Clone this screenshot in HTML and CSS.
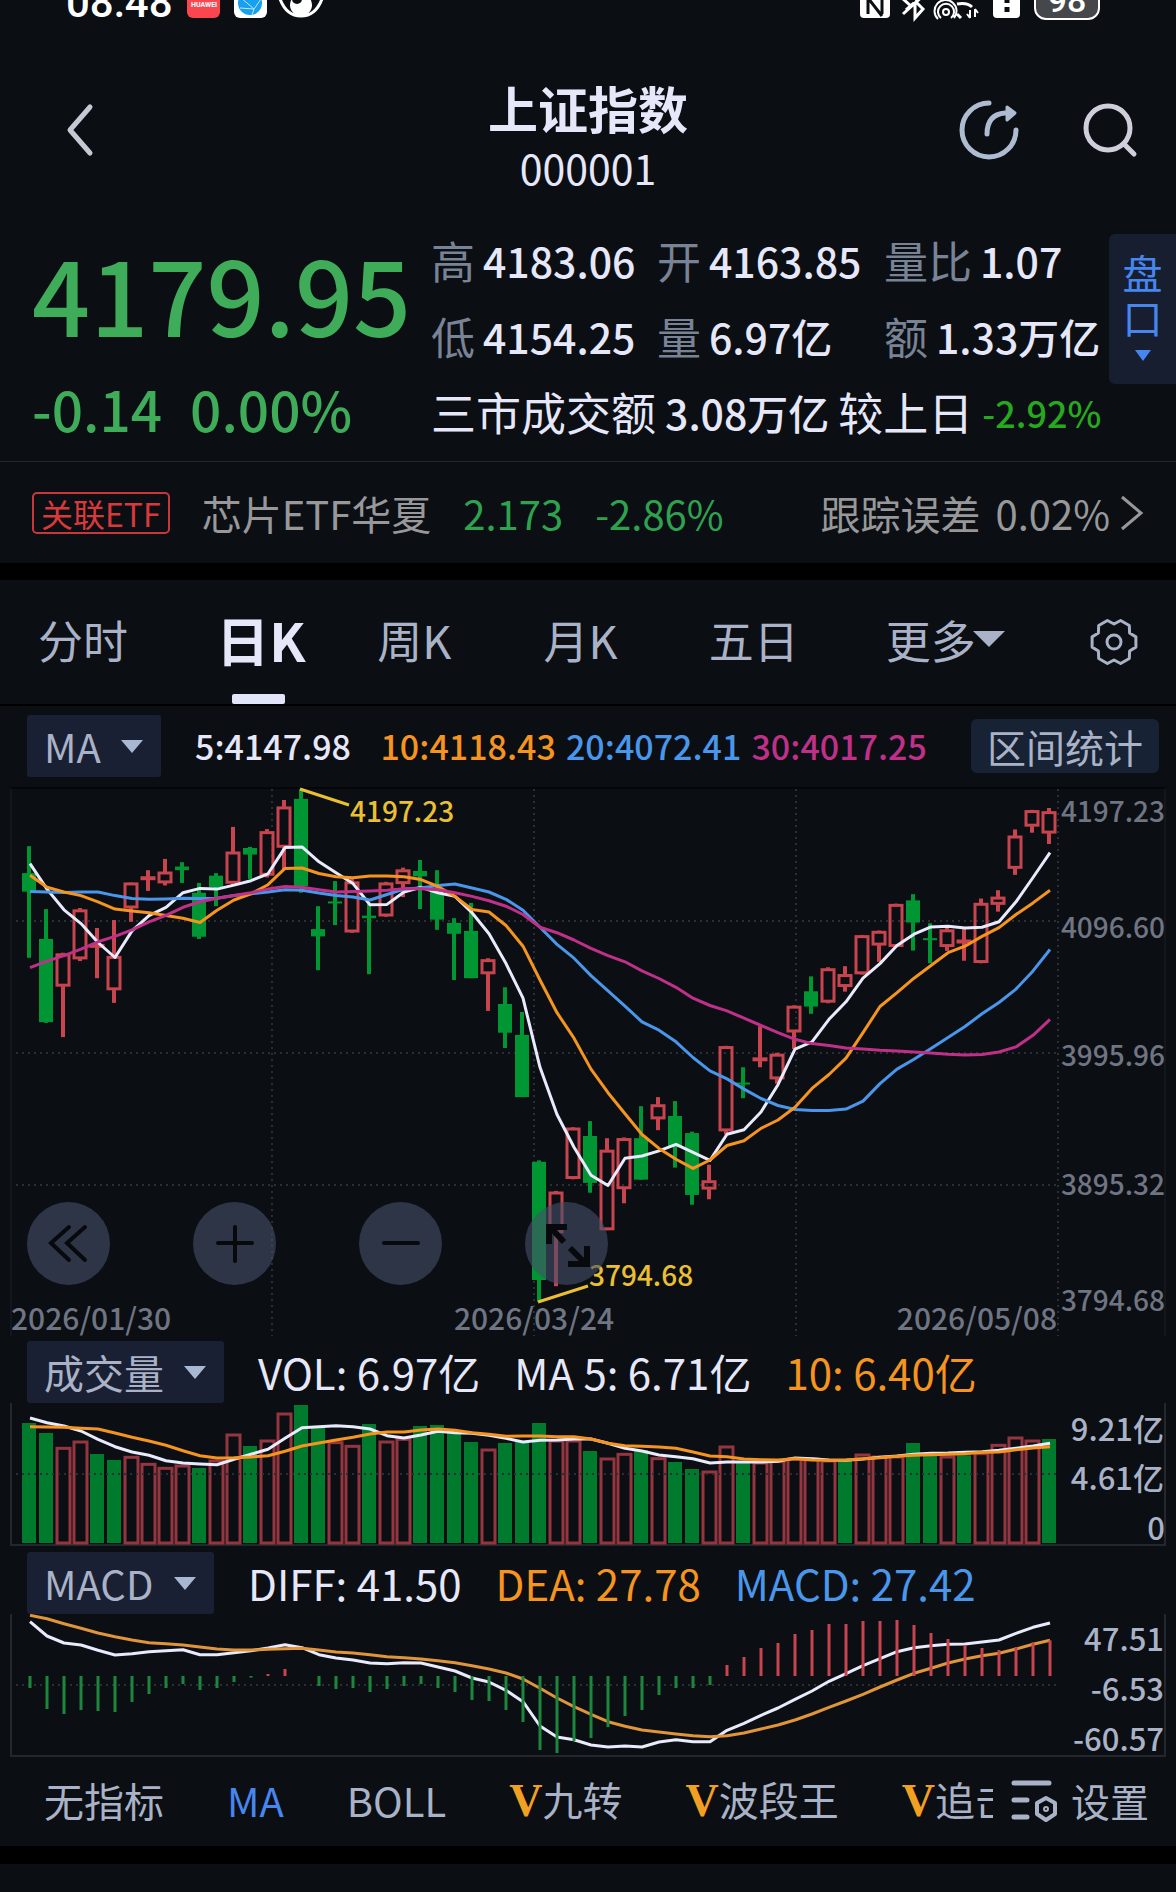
FILE: index.html
```
<!DOCTYPE html>
<html lang="zh-CN">
<head>
    <meta charset="UTF-8">
    <meta name="viewport" content="width=device-width, initial-scale=1.0">
    <title>上证指数 000001</title>
    <link rel="stylesheet" href="styles.css">
</head>
<body>
    <div class="status">
        <span class="time">08:48</span>
        <svg class="status-left" width="140" height="22" viewBox="0 0 140 22">
            <rect x="0" y="-14" width="33" height="32" rx="6" fill="#fb4650"/>
            <text x="4" y="7" font-size="7" font-weight="700" fill="#fff">HUAWEI</text>
            <rect x="47" y="-14" width="33" height="32" rx="6" fill="#fff"/>
            <circle cx="63" cy="3" r="12" fill="#179ff0"/>
            <path d="M53-3l14 12 7-10M67 9l-2 6M53 8l14 1" fill="none" stroke="#bfe6ff"/>
            <path d="M92-4c4 13 11 20 22 20s18-7 22-20" fill="none" stroke="#fff" stroke-width="3"/>
            <circle cx="114" cy="5" r="11" fill="#fff"/>
            <circle cx="110" cy="-1" r="5" fill="#0b0e13"/>
        </svg>
        <svg class="status-right" width="166" height="22" viewBox="0 0 166 22">
            <rect x="0" y="-12" width="30" height="30" rx="4" fill="#fff"/>
            <path d="M8-6v20M8-2l14 18M22-6v20" fill="none" stroke="#0b0e13" stroke-width="3"/>
            <path d="M43 14l22-20M42-2l10 9M46 10l8-7M55 2v16l8-9-8-8" fill="none" stroke="#fff" stroke-width="3"/>
            <g fill="none" stroke="#fff" stroke-width="2">
                <circle cx="86" cy="12" r="3"/>
                <path d="M81 18a8 8 0 1 1 10 0M78 19a11 11 0 1 1 16-1"/>
                <path d="M97 4q10-2 15 3M97 14l4 4" stroke-width="3"/>
                <path d="M110 10v8M115 9v8M107 14l3 4M118 13l-3-4"/>
            </g>
            <rect x="133" y="-12" width="27" height="30" rx="4" fill="#fff"/>
            <path d="M147-2v5M147 7v5" stroke="#0b0e13" stroke-width="5"/>
        </svg>
        <span class="battery">98</span>
    </div>

    <header class="header">
        <button class="icon-btn back" aria-label="返回">
            <svg width="30" height="56" viewBox="0 0 30 56"><path d="M26 5L6 28l20 23" fill="none" stroke="#c6c8d4" stroke-width="5" stroke-linecap="round" stroke-linejoin="round"/></svg>
        </button>
        <div class="title">
            <h1>上证指数</h1>
            <p>000001</p>
        </div>
        <div class="actions">
            <button class="icon-btn" aria-label="分享">
                <svg width="62" height="62" viewBox="0 0 62 62" fill="none" stroke="#aebcd2" stroke-width="5" stroke-linecap="round">
                    <path d="M31 4A27 27 0 1 0 58 31"/>
                    <path d="M29 35c0-13 6-20 18-21"/>
                    <path d="M49 8l8 6-8 7z" fill="#aebcd2" stroke-width="3" stroke-linejoin="round"/>
                </svg>
            </button>
            <button class="icon-btn" aria-label="搜索">
                <svg width="56" height="56" viewBox="0 0 56 56" fill="none" stroke="#cfcfdb" stroke-width="5" stroke-linecap="round">
                    <circle cx="26" cy="26" r="22"/>
                    <path d="M42 42l10 10"/>
                </svg>
            </button>
        </div>
    </header>

    <section class="quote">
        <div class="price">
            <strong>4179.95</strong>
            <p><span>-0.14</span><span>0.00%</span></p>
        </div>
        <div class="stats">
            <dl class="stat-grid">
                <div><dt>高</dt><dd>4183.06</dd></div>
                <div><dt>开</dt><dd>4163.85</dd></div>
                <div><dt>量比</dt><dd>1.07</dd></div>
                <div><dt>低</dt><dd>4154.25</dd></div>
                <div><dt>量</dt><dd>6.97亿</dd></div>
                <div><dt>额</dt><dd>1.33万亿</dd></div>
            </dl>
            <p class="turnover"><span>三市成交额</span><b>3.08万亿</b><span>较上日</span><em>-2.92%</em></p>
        </div>
        <button class="depth">盘<br>口<i class="arrow"></i></button>
    </section>

    <a class="etf" href="#etf">
        <span class="badge">关联ETF</span>
        <span class="etf-name">芯片ETF华夏</span>
        <span class="down">2.173</span>
        <span class="down">-2.86%</span>
        <span class="track">跟踪误差</span>
        <span>0.02%</span>
        <svg width="24" height="36" viewBox="0 0 24 36"><path d="M2 2l19 16L2 34" fill="none" stroke="#98989a" stroke-width="3"/></svg>
    </a>

    <nav class="tabs">
        <button>分时</button>
        <button class="active">日K</button>
        <button>周K</button>
        <button>月K</button>
        <button>五日</button>
        <button>更多<i class="arrow"></i></button>
        <button aria-label="图表设置">
            <svg width="48" height="48" viewBox="0 0 48 48" fill="none" stroke="#a9b2c6" stroke-width="3" stroke-linejoin="round">
                <path d="M45.9 18.9v10.2L39.6 33l-.3 7.5-8.7 5L24 42l-6.6 3.5-8.7-5L8.4 33l-6.3-3.9V18.9L8.4 15l.3-7.5 8.7-5L24 6l6.6-3.5 8.7 5 .3 7.5z"/>
                <circle cx="24" cy="24" r="7"/>
            </svg>
        </button>
    </nav>

    <div class="legend ma-legend">
        <label class="picker"><select aria-label="主图指标"><option>MA</option></select></label>
        <div class="ma-values">
            <span>5:4147.98</span>
            <span class="orange">10:4118.43</span>
            <span class="blue">20:4072.41</span>
            <span class="pink">30:4017.25</span>
        </div>
        <button class="range-btn">区间统计</button>
    </div>

    <div class="kline">
        <svg id="kline" viewBox="0 0 1176 550"></svg>
        <div class="chart-tools">
            <button aria-label="左移"><svg viewBox="0 0 83 83"><path d="M42 25L24 41l18 17M58 25L40 41l18 17"/></svg></button>
            <button aria-label="放大"><svg viewBox="0 0 83 83"><path d="M25 41h34M42 25v34"/></svg></button>
            <button aria-label="缩小"><svg viewBox="0 0 83 83"><path d="M25 41h34"/></svg></button>
            <button aria-label="全屏"><svg class="expand" viewBox="0 0 83 83"><path d="M39 40L25 25M24 42V25h18M45 46l16 16M62 44v18H43"/></svg></button>
        </div>
    </div>

    <div class="legend">
        <label class="picker"><select aria-label="副图一指标"><option>成交量</option></select></label>
        <span>VOL: 6.97亿</span>
        <span>MA 5: 6.71亿</span>
        <span class="orange">10: 6.40亿</span>
    </div>
    <svg id="volume" viewBox="0 0 1176 144"></svg>

    <div class="legend">
        <label class="picker"><select aria-label="副图二指标"><option>MACD</option></select></label>
        <span>DIFF: 41.50</span>
        <span class="orange">DEA: 27.78</span>
        <span class="blue">MACD: 27.42</span>
    </div>
    <svg id="macd" viewBox="0 0 1176 144"></svg>

    <div class="indicators">
        <div class="indicator-list">
            <button>无指标</button>
            <button class="active">MA</button>
            <button>BOLL</button>
            <button><b>V</b>九转</button>
            <button><b>V</b>波段王</button>
            <button><b>V</b>追击</button>
        </div>
        <button class="settings">
            <svg width="48" height="44" viewBox="0 0 48 44" fill="none" stroke="#a9b2c6" stroke-width="5" stroke-linecap="round">
                <path d="M3 5h35M3 22h13M3 39h13"/>
                <path d="M35 20l9 5v11l-9 6-9-6V25z" stroke-width="4" stroke-linejoin="round"/>
                <circle cx="35" cy="31" r="1" stroke-width="4"/>
            </svg>
            设置
        </button>
    </div>

    <script src="charts.js"></script>
</body>
</html>
```
FILE: charts.js
```
const RED = '#c8444e';
const GREEN = '#009634';
const WHITE = '#e9eafb';
const ORANGE = '#f5941f';
const BLUE = '#4a96ea';
const PINK = '#bf3088';
const STEP = 17;
const FIRST = 29;

// [color, high, body top, body bottom, low], measured down from the top of the pane
const candles = [
    ['g', 182, 256, 307, 489], ['g', 355, 437, 666, 668], ['r', 475, 478, 567, 707],
    ['r', 352, 357, 492, 498], ['r', 407, 452, 456, 545], ['r', 385, 485, 577, 613],
    ['r', 282, 283, 352, 390], ['r', 248, 266, 270, 305], ['r', 217, 253, 283, 290],
    ['g', 226, 238, 248, 283], ['g', 283, 310, 431, 437], ['g', 256, 263, 295, 347],
    ['r', 129, 198, 284, 290], ['g', 184, 187, 205, 272], ['r', 135, 142, 262, 268],
    ['r', 55, 74, 185, 245], ['g', 26, 52, 292, 310], ['g', 347, 410, 430, 523],
    ['g', 278, 334, 338, 399], ['r', 268, 280, 418, 420], ['g', 340, 373, 380, 534],
    ['r', 280, 283, 374, 376], ['r', 241, 247, 285, 322], ['g', 220, 250, 265, 355],
    ['g', 248, 300, 384, 412], ['g', 380, 393, 423, 550], ['g', 338, 415, 545, 545],
    ['r', 490, 494, 533, 635], ['g', 570, 616, 695, 737], ['g', 638, 701, 872, 872],
    ['g', 1046, 1050, 1375, 1435], ['r', 1130, 1133, 1245, 1392], ['r', 955, 957, 1096, 1098],
    ['g', 938, 979, 1108, 1135], ['r', 985, 1018, 1237, 1238], ['r', 983, 986, 1124, 1164],
    ['g', 897, 985, 1099, 1099], ['r', 872, 893, 932, 963], ['g', 883, 924, 1010, 1066],
    ['g', 967, 971, 1141, 1168], ['r', 1058, 1102, 1125, 1153], ['r', 731, 733, 965, 975],
    ['g', 790, 832, 836, 875], ['r', 677, 764, 768, 790], ['r', 750, 754, 822, 835],
    ['r', 620, 622, 693, 740], ['g', 540, 581, 623, 643], ['r', 515, 519, 611, 614],
    ['r', 512, 535, 568, 582], ['r', 426, 428, 533, 535], ['r', 414, 416, 454, 500],
    ['r', 340, 342, 458, 460], ['g', 314, 331, 392, 469], ['g', 394, 435, 439, 504],
    ['r', 402, 412, 458, 470], ['r', 405, 440, 446, 497], ['r', 326, 339, 502, 504],
    ['r', 303, 322, 342, 362], ['r', 136, 154, 243, 261], ['r', 82, 84, 127, 145],
    ['r', 77, 87, 146, 176]
];
const ma5 = [230, 300, 357, 395, 447, 488, 415, 373, 350, 310, 298, 300, 289, 277, 258, 186, 184, 225, 255, 285, 343, 342, 308, 295, 310, 320, 365, 423, 505, 600, 790, 920, 1010, 1087, 1115, 1040, 1034, 1020, 1002, 1024, 1046, 974, 962, 913, 838, 740, 720, 658, 610, 545, 505, 455, 424, 404, 402, 407, 405, 390, 335, 268, 200];
const ma10 = [262, 295, 308, 318, 335, 355, 360, 365, 373, 380, 392, 358, 330, 313, 288, 243, 242, 257, 266, 269, 264, 264, 266, 274, 293, 320, 356, 363, 400, 457, 550, 640, 710, 795, 860, 918, 975, 1013, 1043, 1068, 1045, 1005, 992, 958, 935, 900, 848, 810, 765, 695, 623, 585, 545, 510, 475, 457, 430, 406, 370, 338, 303];
const ma20 = [307, 308, 309, 308, 308, 318, 326, 328, 327, 325, 326, 325, 318, 313, 308, 302, 303, 311, 318, 322, 330, 315, 300, 297, 290, 286, 297, 308, 328, 358, 405, 452, 490, 538, 580, 622, 665, 688, 720, 763, 800, 822, 850, 876, 895, 906, 909, 909, 905, 883, 835, 795, 768, 738, 708, 678, 643, 612, 575, 525, 466];
const ma30 = [516, 498, 483, 465, 445, 430, 412, 390, 372, 350, 335, 325, 318, 310, 300, 293, 295, 302, 308, 307, 305, 303, 299, 299, 302, 310, 320, 332, 347, 370, 405, 420, 440, 463, 483, 500, 525, 546, 570, 600, 620, 635, 655, 675, 695, 713, 725, 730, 737, 740, 743, 745, 748, 751, 754, 756, 755, 748, 734, 702, 658];

const volColors = 'ggrrggrrrrgrrgrrggrrgrrggggrgggrrgrrgrggrrgrrrrrgrrrggrgrrrrg';
const volumes = [279, 309, 352, 333, 372, 390, 379, 400, 412, 405, 414, 390, 312, 348, 330, 249, 225, 290, 335, 346, 282, 333, 325, 288, 285, 300, 336, 357, 339, 335, 279, 330, 330, 363, 384, 370, 360, 383, 396, 417, 423, 348, 395, 396, 392, 384, 384, 390, 390, 372, 378, 378, 339, 372, 378, 376, 368, 343, 321, 330, 327];
const volMa5 = [264, 278, 288, 303, 328, 350, 366, 376, 392, 399, 402, 404, 388, 373, 358, 325, 293, 290, 287, 290, 297, 317, 324, 315, 304, 308, 310, 316, 325, 336, 331, 330, 327, 327, 340, 355, 363, 375, 380, 386, 399, 396, 396, 396, 394, 384, 386, 390, 391, 387, 382, 378, 373, 370, 369, 367, 365, 361, 355, 348, 340];
const volMa10 = [290, 291, 292, 295, 297, 309, 322, 333, 346, 362, 377, 384, 383, 381, 377, 364, 348, 339, 330, 322, 312, 306, 306, 300, 297, 301, 308, 313, 319, 318, 318, 320, 320, 327, 340, 347, 349, 351, 355, 366, 378, 380, 387, 389, 390, 386, 390, 391, 390, 386, 383, 379, 376, 374, 373, 371, 367, 366, 359, 354, 350];

const macdBars = [261, 324, 339, 327, 330, 333, 303, 279, 261, 249, 267, 261, 243, 230, 219, 204, 225, 255, 264, 261, 273, 264, 255, 249, 261, 273, 297, 300, 327, 363, 447, 456, 420, 411, 378, 345, 327, 282, 261, 261, 252, 192, 168, 141, 126, 99, 87, 69, 69, 60, 60, 57, 72, 96, 114, 132, 141, 147, 138, 124, 118];
const diff = [62, 105, 126, 132, 148, 162, 158, 152, 149, 146, 161, 161, 155, 149, 141, 131, 140, 161, 171, 177, 186, 188, 185, 186, 198, 210, 231, 243, 268, 302, 375, 408, 416, 432, 438, 435, 438, 423, 416, 422, 422, 388, 367, 343, 321, 295, 270, 241, 218, 194, 173, 152, 140, 134, 130, 129, 123, 117, 97, 79, 66];
const dea = [43, 53, 68, 82, 96, 107, 117, 125, 128, 132, 138, 144, 147, 147, 145, 143, 142, 147, 153, 156, 161, 167, 170, 174, 179, 185, 194, 204, 216, 234, 262, 291, 317, 340, 362, 376, 387, 393, 399, 404, 407, 404, 396, 384, 372, 357, 339, 319, 300, 280, 258, 237, 217, 202, 186, 174, 164, 157, 144, 130, 118];

const cx = i => FIRST + i * STEP;

function line(x1, y1, x2, y2, stroke, width, extra = '') {
    return `<line x1="${x1}" y1="${y1}" x2="${x2}" y2="${y2}" stroke="${stroke}" stroke-width="${width}" ${extra}/>`;
}

function dotted(x1, y1, x2, y2) {
    return line(x1, y1, x2, y2, '#2b2e34', 2, 'stroke-dasharray="2 4"');
}

function curve(values, y, stroke) {
    const points = values.map((v, i) => `${cx(i) + 1},${y(v).toFixed(1)}`).join(' ');
    return `<polyline points="${points}" fill="none" stroke="${stroke}" stroke-width="3" stroke-linejoin="round"/>`;
}

function text(x, y, value, cls, anchor = 'start') {
    return `<text x="${x}" y="${y}" class="${cls}" text-anchor="${anchor}">${value}</text>`;
}

function drawKline() {
    const y = v => v / 2.75 - 6;
    let out = line(10, 2, 1166, 2, '#050608', 2) + line(11, 2, 11, 550, '#1c1f25', 1) + line(1165, 2, 1165, 550, '#1c1f25', 1);
    [135, 267, 399].forEach(v => out += dotted(16, v, 1058, v));
    [272, 534, 796, 1058].forEach(v => out += dotted(v, 3, v, 550));
    candles.forEach(([c, high, top, bottom, low], i) => {
        const x = cx(i);
        const h = Math.max(y(bottom) - y(top), 2);
        if (c === 'g') {
            out += line(x, y(high), x, y(low), GREEN, 4);
            out += `<rect x="${x - 7}" y="${y(top)}" width="14" height="${h}" fill="${GREEN}"/>`;
        } else {
            out += line(x, y(high), x, y(top), RED, 4) + line(x, y(bottom), x, y(low), RED, 4);
            out += `<rect x="${x - 6}" y="${y(top) + 1}" width="12" height="${Math.max(h - 2, 1)}" fill="none" stroke="${RED}" stroke-width="3"/>`;
        }
    });
    out += curve(ma5, y, WHITE) + curve(ma20, y, BLUE) + curve(ma10, y, ORANGE) + curve(ma30, y, PINK);
    out += line(300, 3, 349, 19, '#eac032', 3) + line(538, 516, 588, 500, '#eac032', 3);
    out += text(350, 36, '4197.23', 'mark') + text(589, 500, '3794.68', 'mark');
    [['4197.23', 36], ['4096.60', 152], ['3995.96', 280], ['3895.32', 409], ['3794.68', 525]].forEach(([t, ty]) => {
        out += text(1165, ty, t, 'axis', 'end');
    });
    out += text(11, 544, '2026/01/30', 'date') + text(534, 544, '2026/03/24', 'date', 'middle') + text(1057, 544, '2026/05/08', 'date', 'end');
    document.getElementById('kline').innerHTML = out;
}

function frame() {
    return `<path d="M11 0v142h1154V0" fill="none" stroke="#24282e" stroke-width="2"/>`;
}

function drawVolume() {
    const y = v => v / 3 - 73;
    let out = frame();
    volumes.forEach((v, i) => {
        const x = cx(i);
        if (volColors[i] === 'g') {
            out += `<rect x="${x - 7}" y="${y(v)}" width="14" height="${140 - y(v)}" fill="#007a2c"/>`;
        } else {
            out += `<rect x="${x - 6}" y="${y(v) + 1}" width="13" height="${139 - y(v)}" fill="none" stroke="#943640" stroke-width="3"/>`;
        }
    });
    out += dotted(16, 71, 1058, 71);
    out += curve(volMa5, y, WHITE) + curve(volMa10, y, ORANGE);
    out += text(1164, 38, '9.21亿', 'side', 'end') + text(1164, 87, '4.61亿', 'side', 'end') + text(1165, 137, '0', 'side', 'end');
    document.getElementById('volume').innerHTML = out;
}

function drawMacd() {
    const y = v => v / 3 - 13;
    let out = frame() + dotted(16, 71, 1058, 71);
    out += curve(diff, y, WHITE) + curve(dea, y, '#e0953a');
    macdBars.forEach((v, i) => {
        out += line(cx(i) + 1, 62, cx(i) + 1, y(v), v > 225 ? '#1d863c' : RED, 3);
    });
    out += text(1164, 37, '47.51', 'side', 'end') + text(1164, 87, '-6.53', 'side', 'end') + text(1164, 137, '-60.57', 'side', 'end');
    document.getElementById('macd').innerHTML = out;
}

drawKline();
drawVolume();
drawMacd();
```
FILE: styles.css
```
* {
    box-sizing: border-box;
}
body {
    margin: 0;
    min-height: 100vh;
    background-color: #0b0e13;
    color: #e6e8fa;
    font-family: "Noto Sans CJK SC", "Liberation Sans", sans-serif;
    font-size: 40px;
    line-height: 1;
}
h1, p, dl, dd {
    margin: 0;
}
button, select {
    font: inherit;
    color: inherit;
    background: none;
    border: none;
    padding: 0;
    white-space: nowrap;
    cursor: pointer;
}
svg {
    display: block;
}
#kline, #volume, #macd {
    width: 100%;
    height: auto;
}
.arrow {
    display: inline-block;
    border: 11px solid transparent;
    border-top: 14px solid currentColor;
    border-bottom: 0;
}

/* status bar */
.status {
    display: flex;
    align-items: flex-end;
    height: 22px;
    padding: 0 76px 0 66px;
    overflow: hidden;
    font-family: Roboto, sans-serif;
    color: #fff;
}
.time {
    font-size: 42px;
    font-weight: 500;
    line-height: 38px;
}
.status-left {
    margin-left: 14px;
}
.status-right {
    margin-left: auto;
}
.battery {
    width: 66px;
    height: 42px;
    margin: 0 0 2px 8px;
    border: 2px solid #fff;
    border-radius: 12px;
    background-color: #45474b;
    font-size: 34px;
    font-weight: 500;
    line-height: 40px;
    text-align: center;
}

/* header */
.header {
    display: grid;
    grid-template-columns: 200px 1fr 200px;
    align-items: center;
    height: 208px;
    padding: 8px 38px 0 64px;
}
.back {
    justify-self: start;
}
.title {
    padding: 14px 26px 0 0;
    text-align: center;
}
.title h1 {
    font-size: 50px;
    line-height: 60px;
}
.title p {
    font-size: 41px;
    line-height: 60px;
}
.actions {
    display: flex;
    align-items: center;
    justify-content: flex-end;
    gap: 62px;
}

/* quote */
.quote {
    display: flex;
    align-items: flex-start;
    height: 232px;
    border-bottom: 1px solid #25282d;
}
.price {
    width: 431px;
    padding-left: 32px;
    color: #3fac59;
}
.price strong {
    display: block;
    font-size: 102px;
    font-weight: 500;
    line-height: 126px;
}
.price p {
    display: flex;
    gap: 28px;
    font-size: 55px;
    font-weight: 500;
    line-height: 104px;
}
.stats {
    flex: 1;
    margin-top: -8px;
    line-height: 76px;
}
.stat-grid {
    display: grid;
    grid-template-columns: 226px 227px 1fr;
}
.stat-grid div, .turnover {
    display: flex;
    white-space: nowrap;
}
.stat-grid div {
    gap: 8px;
}
dt {
    font-size: 44px;
    color: #788395;
}
dd, .turnover b {
    font-size: 41px;
    font-weight: 500;
}
.turnover {
    gap: 9px;
    font-size: 45px;
}
.turnover em {
    font-size: 36px;
    font-style: normal;
    font-weight: 500;
    color: #26a91f;
}
.depth {
    width: 67px;
    height: 150px;
    margin-top: 4px;
    padding-bottom: 8px;
    border-radius: 6px 0 0 6px;
    background-color: #171e2f;
    color: #4686ee;
    line-height: 45px;
}
.depth .arrow {
    display: block;
    width: 0;
    margin: 10px auto 0;
    border-width: 11px 8px 0;
}

/* related etf */
.etf {
    display: flex;
    align-items: center;
    height: 101px;
    padding: 0 32px;
    color: #98989a;
    text-decoration: none;
    white-space: nowrap;
}
.badge {
    padding: 0 7px;
    border: 2px solid #c8373c;
    border-radius: 5px;
    color: #d8393b;
    font-size: 32px;
    line-height: 38px;
}
.etf-name {
    margin: 0 32px;
}
.down {
    margin-right: 32px;
    color: #2fa24f;
}
.track {
    margin: 0 15px 0 auto;
}
.etf svg {
    margin-left: 10px;
}

/* period tabs */
.tabs {
    display: grid;
    grid-template-columns: 178fr 161fr 166fr 165fr 177fr 204fr 48px;
    align-items: center;
    height: 143px;
    padding: 0 38px;
    border-top: 17px solid #000;
    border-bottom: 2px solid #000;
    font-size: 45px;
    color: #a9b2c6;
}
.tabs button {
    display: flex;
    align-items: center;
    height: 124px;
    padding-bottom: 6px;
}
.tabs button:last-child {
    padding-bottom: 0;
}
.tabs .active {
    position: relative;
    font-size: 53px;
    font-weight: 700;
    color: #e6e8fa;
}
.tabs .active::after {
    content: "";
    position: absolute;
    left: 16px;
    bottom: 0;
    width: 53px;
    height: 10px;
    border-radius: 2px;
    background-color: #e2e4f8;
}
.tabs .arrow {
    margin-left: -3px;
    border-width: 16px 16px 0;
}

/* legends */
.legend {
    display: flex;
    align-items: flex-end;
    gap: 34px;
    height: 67px;
    padding: 0 17px 0 27px;
    font-size: 42px;
    line-height: 62px;
    white-space: nowrap;
}
.ma-legend {
    align-items: center;
    height: 80px;
}
.picker {
    position: relative;
    font-size: 40px;
    color: #a9b2c6;
}
.picker select {
    appearance: none;
    display: block;
    height: 62px;
    padding: 0 60px 0 17px;
    border-radius: 3px;
    background-color: #1a2033;
}
.picker::after {
    content: "";
    position: absolute;
    right: 18px;
    top: 25px;
    border: 11px solid transparent;
    border-top: 13px solid #a9b8d2;
    border-bottom: 0;
    pointer-events: none;
}
.ma-values {
    display: grid;
    flex: 1;
    grid-template-columns: repeat(4, 1fr);
    font-size: 34px;
    font-weight: 500;
}
.range-btn {
    height: 54px;
    padding: 0 16px;
    border-radius: 6px;
    background-color: #182235;
    color: #a9b2c6;
    font-size: 39px;
    line-height: 54px;
}
.orange {
    color: #f5941f;
}
.blue {
    color: #4a96ea;
}
.pink {
    color: #bf3088;
}

/* charts */
.kline {
    position: relative;
}
.chart-tools {
    position: absolute;
    left: 27px;
    bottom: 51px;
    display: flex;
    gap: 83px;
}
.chart-tools button {
    width: 83px;
    height: 83px;
    border-radius: 50%;
    background-color: rgba(68, 80, 105, 0.6);
}
.chart-tools path {
    fill: none;
    stroke: #07090d;
    stroke-width: 4;
    stroke-linecap: round;
}
.chart-tools .expand path {
    stroke-width: 6;
    stroke-linecap: butt;
}
.mark {
    font-size: 28px;
    font-weight: 500;
    fill: #eac032;
}
.axis {
    font-size: 28px;
    font-weight: 500;
    fill: #6f7582;
}
.date {
    font-size: 30px;
    font-weight: 500;
    fill: #6f7582;
}
.side {
    font-size: 31px;
    font-weight: 500;
    fill: #a9b2c6;
}

/* bottom indicators */
.indicators {
    display: flex;
    align-items: center;
    gap: 18px;
    height: 106px;
    padding: 0 27px 4px 44px;
    border-bottom: 18px solid #000;
    color: #a9b2c6;
}
.indicator-list {
    display: flex;
    flex: 1;
    gap: 63px;
    overflow: hidden;
    line-height: 60px;
}
.indicator-list .active {
    color: #4686ee;
}
.indicator-list b {
    font-family: "Liberation Serif", serif;
    font-size: 46px;
    color: #f2a022;
}
.settings {
    display: flex;
    align-items: center;
    gap: 12px;
    font-size: 39px;
}
```
